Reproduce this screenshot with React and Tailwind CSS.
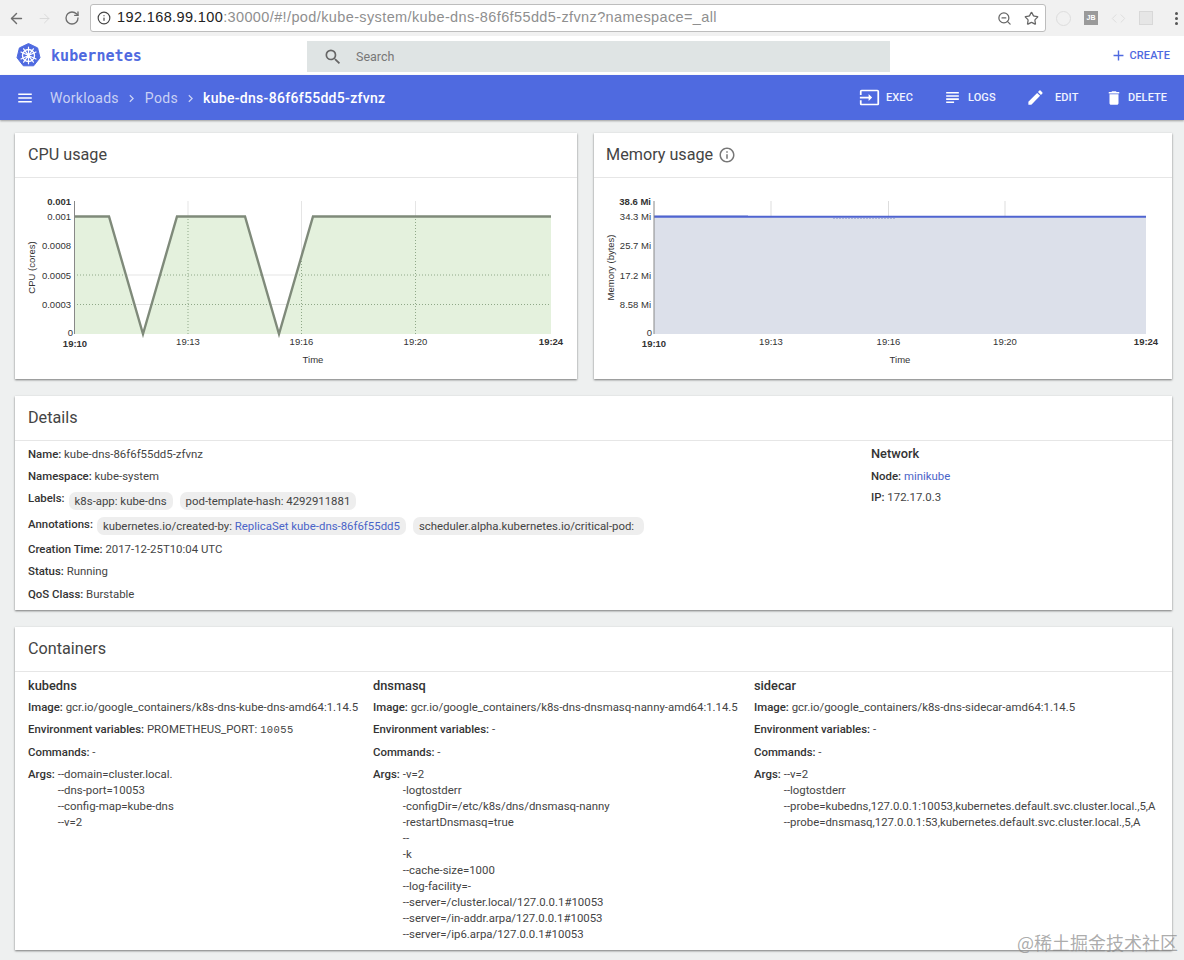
import React from 'react';
import { ArrowLeft, ArrowRight, RotateCw, Info, ZoomOut, Star, Code } from 'lucide-react';
import { MdMenu, MdSearch, MdAdd, MdInput, MdSubject, MdEdit, MdDelete, MdInfoOutline, MdChevronRight } from 'react-icons/md';

const KubeLogo = () => (
  <svg width="25" height="25" viewBox="0 0 25 25">
    <path d="M12.5 0.5 L21.6 4.9 L24 14.7 L17.7 22.8 L7.3 22.8 L1 14.7 L3.4 4.9 Z" fill="#4f6ae0" stroke="#4f6ae0" strokeWidth="1" strokeLinejoin="round" />
    <g stroke="#fff" fill="none" strokeLinecap="round">
      <circle cx="12.5" cy="12.5" r="6" strokeWidth="1.4" />
      <path strokeWidth="1.2" d="M12.5 4.2V20.8M5 9L20 16M5 16L20 9M7.6 5.8L17.4 19.2M17.4 5.8L7.6 19.2" />
    </g>
    <circle cx="12.5" cy="12.5" r="1.5" fill="#fff" />
  </svg>
);

const BrowserBar = () => (
  <div className="h-[36px] bg-[#f1f1f1] flex items-center relative">
    <div className="w-[90px] flex items-center pl-[8px] gap-[12px] text-[#6e6e6e]">
      <ArrowLeft size={17} strokeWidth={2} />
      <ArrowRight size={15} strokeWidth={1.5} className="text-[#d8d8d8]" />
      <RotateCw size={16} strokeWidth={2} />
    </div>
    <div className="w-[956px] h-[28px] bg-white border border-[#bdbdbd] rounded-[3px] flex items-center pl-[6px] pr-[4px]">
      <Info size={14} className="text-[#444] mr-[6px] shrink-0" />
      <span className="font-['Liberation_Sans',sans-serif] text-[14.5px] text-[#8f8f8f] whitespace-nowrap grow tracking-[0.38px]">
        <span className="text-[#222]">192.168.99.100</span>:30000/#!/pod/kube-system/kube-dns-86f6f55dd5-zfvnz?namespace=_all
      </span>
      <ZoomOut size={15} className="text-[#666] mr-[12px] shrink-0" />
      <Star size={15} strokeWidth={2} className="text-[#666] mr-[2px] shrink-0" />
    </div>
    <div className="flex items-center pl-[10px] gap-[13px] text-[#dcdcdc]">
      <div className="w-[15px] h-[15px] rounded-full border border-[#dddddd]" />
      <div className="w-[14px] h-[14px] bg-[#9a9a9a] text-white text-[7px] font-bold leading-[14px] text-center font-['Liberation_Sans',sans-serif]">JB</div>
      <Code size={15} strokeWidth={1.5} />
      <div className="w-[14px] h-[14px] border border-[#d8d8d8] bg-[#e6e6e6]" />
      <div className="flex flex-col gap-[2px] ml-[9px]">
        <div className="w-[3px] h-[3px] rounded-full bg-[#555]" />
        <div className="w-[3px] h-[3px] rounded-full bg-[#555]" />
        <div className="w-[3px] h-[3px] rounded-full bg-[#555]" />
      </div>
    </div>
  </div>
);

const TopBar = () => (
  <div className="h-[39px] bg-white flex items-center">
    <div className="w-[307px] flex items-center pl-[16px]">
      <KubeLogo />
      <span className="ml-[10px] pt-[2px] font-['DejaVu_Sans_Mono',monospace] font-bold text-[15px] tracking-[0.05px] text-[#4f6ae0]">kubernetes</span>
    </div>
    <div className="w-[583px] h-[31px] bg-[#dfe4e4] flex items-center pl-[16px] mt-[2px]">
      <MdSearch size={20} className="text-[#666]" />
      <span className="ml-[13px] pt-[2px] text-[12.5px] text-[#777]">Search</span>
    </div>
    <div className="grow flex items-center justify-end pr-[14px] text-[#4f6ae0]">
      <MdAdd size={17} />
      <span className="ml-[3px] pt-[1px] text-[11px] font-medium tracking-[0.1px]">CREATE</span>
    </div>
  </div>
);

const ActionButton = ({ icon: Icon, label, size, gap, width }) => (
  <div className="flex items-center" style={{ width }}>
    <Icon size={size} />
    <span className="pt-[1px] text-[11px] font-medium tracking-[0.1px] text-[#f0f3ff]" style={{ marginLeft: gap }}>{label}</span>
  </div>
);

const ActionBar = () => (
  <div className="h-[45px] bg-[#4f6ae0] flex items-center text-white shadow-[0_1px_2px_rgba(0,0,0,0.35)] relative">
    <MdMenu size={18} className="ml-[16px]" />
    <span className="ml-[16px] pt-[2px] text-[14px] text-white/70 tracking-[0.3px]">Workloads</span>
    <MdChevronRight size={15} className="ml-[5px] mt-[2px] text-white/70" />
    <span className="ml-[6px] pt-[2px] text-[14px] text-white/70 tracking-[0.35px]">Pods</span>
    <MdChevronRight size={15} className="ml-[5px] mt-[2px] text-white/70" />
    <span className="ml-[5px] pt-[2px] text-[14px] font-medium tracking-[0.3px]">kube-dns-86f6f55dd5-zfvnz</span>
    <div className="grow" />
    <div className="flex items-center pr-[16px]">
      <ActionButton icon={MdInput} label="EXEC" size={21} gap={6} width={84} />
      <ActionButton icon={MdSubject} label="LOGS" size={19} gap={6} width={83} />
      <ActionButton icon={MdEdit} label="EDIT" size={19} gap={10} width={79} />
      <ActionButton icon={MdDelete} label="DELETE" size={18} gap={5} width={63} />
    </div>
  </div>
);

const Card = ({ title, extra, className = '', children }) => (
  <div className={`bg-white shadow-[0_1px_2px_rgba(0,0,0,0.5)] flex flex-col ${className}`}>
    <div className="h-[45px] shrink-0 border-b border-[#e6e6e6] flex items-center pl-[13px] text-[16.2px] text-[#444]">
      {title}
      {extra}
    </div>
    {children}
  </div>
);

const axisText = { fontFamily: '"Liberation Sans", sans-serif', fontSize: 9.5, fill: '#333' };

const Tick = ({ x, y, bold, anchor = 'end', children }) => (
  <text x={x} y={y} textAnchor={anchor} style={{ ...axisText, fontWeight: bold ? 700 : 400 }}>{children}</text>
);

const CpuChart = () => {
  const grid = [188, 301.5, 415.5];
  const rows = [275, 304.5];
  const line = 'M74.5 216.5 L109 216.5 L143 334 L177 216.5 L245 216.5 L279 334 L313 216.5 L551 216.5';
  const area = `${line} L551 334 L74.5 334 Z`;
  return (
    <svg viewBox="15 178 562 201" width="562" height="201" className="block">
      <defs>
        <clipPath id="cpu-area"><path d={area} /></clipPath>
      </defs>
      {rows.map((y) => (
        <line key={y} x1="74" y1={y} x2="551" y2={y} stroke="#e5e5e5" />
      ))}
      {grid.map((x) => (
        <line key={x} x1={x} y1="201" x2={x} y2="334" stroke="#e5e5e5" />
      ))}
      <path d={area} fill="#e4f1dd" />
      <g clipPath="url(#cpu-area)">
        {rows.map((y) => (
          <line key={y} x1="74" y1={y} x2="551" y2={y} stroke="#8fa888" strokeDasharray="1 2" />
        ))}
        {grid.map((x) => (
          <line key={x} x1={x} y1="201" x2={x} y2="334" stroke="#8fa888" strokeDasharray="1 2" />
        ))}
      </g>
      <path d={line} fill="none" stroke="#7f8a7a" strokeWidth="2.4" />
      <line x1="74.5" y1="201" x2="74.5" y2="334" stroke="#888" />
      <Tick x={71} y={205} bold>0.001</Tick>
      <Tick x={71} y={220}>0.001</Tick>
      <Tick x={71} y={249}>0.0008</Tick>
      <Tick x={71} y={278.5}>0.0005</Tick>
      <Tick x={71} y={308}>0.0003</Tick>
      <Tick x={73} y={335.5}>0</Tick>
      <Tick x={75} y={346.5} bold anchor="middle">19:10</Tick>
      <Tick x={188} y={345} anchor="middle">19:13</Tick>
      <Tick x={301.5} y={345} anchor="middle">19:16</Tick>
      <Tick x={415.5} y={345} anchor="middle">19:20</Tick>
      <Tick x={551} y={345} bold anchor="middle">19:24</Tick>
      <Tick x={313} y={363} anchor="middle">Time</Tick>
      <text transform="translate(34.5 267.5) rotate(-90)" textAnchor="middle" style={axisText}>CPU (cores)</text>
    </svg>
  );
};

const MemoryChart = () => (
  <svg viewBox="594 178 578 201" width="578" height="201" className="block">
    <rect x="654" y="217" width="492" height="117" fill="#dce0ea" />
    {[771, 888.5, 1005].map((x) => (
      <line key={x} x1={x} y1="201" x2={x} y2="219" stroke="#ddd" />
    ))}
    <line x1="654" y1="215.5" x2="748" y2="215.5" stroke="#b9c2e8" />
    <line x1="833" y1="218.5" x2="895" y2="218.5" stroke="#a9b2dc" strokeDasharray="2 1" />
    <line x1="654" y1="216.7" x2="1146" y2="216.7" stroke="#4f64d0" strokeWidth="2" />
    <line x1="654" y1="201" x2="654" y2="334" stroke="#888" />
    <Tick x={651} y={205} bold>38.6 Mi</Tick>
    <Tick x={651} y={220}>34.3 Mi</Tick>
    <Tick x={651} y={249}>25.7 Mi</Tick>
    <Tick x={651} y={278.5}>17.2 Mi</Tick>
    <Tick x={651} y={308}>8.58 Mi</Tick>
    <Tick x={652} y={335.5}>0</Tick>
    <Tick x={654} y={346.5} bold anchor="middle">19:10</Tick>
    <Tick x={771} y={345} anchor="middle">19:13</Tick>
    <Tick x={888.5} y={345} anchor="middle">19:16</Tick>
    <Tick x={1005} y={345} anchor="middle">19:20</Tick>
    <Tick x={1146} y={345} bold anchor="middle">19:24</Tick>
    <Tick x={900} y={363} anchor="middle">Time</Tick>
    <text transform="translate(614 267.5) rotate(-90)" textAnchor="middle" style={axisText}>Memory (bytes)</text>
  </svg>
);

const Field = ({ label, className = '', children }) => (
  <div className={`whitespace-nowrap ${className}`}>
    <span className="font-medium text-[#333]">{label}:</span> {children}
  </div>
);

const Chip = ({ className = '', children }) => (
  <span className={`h-[18px] pl-[6px] pr-[6px] rounded-[7px] bg-[#eeeeee] flex items-center whitespace-nowrap ${className}`}>{children}</span>
);

const Details = () => (
  <Card title="Details" className="h-[214px]">
    <div className="flex pl-[13px] pt-[5px] text-[11.4px] leading-[16px] text-[#444]">
      <div className="w-[843px] flex flex-col">
        <Field label="Name" className="h-[22px]">kube-dns-86f6f55dd5-zfvnz</Field>
        <Field label="Namespace" className="h-[22px]">kube-system</Field>
        <div className="h-[26px] flex gap-[4px]">
          <span className="font-medium text-[#333]">Labels:</span>
          <div className="flex gap-[7px] mt-[2px]">
            <Chip>k8s-app: kube-dns</Chip>
            <Chip>pod-template-hash: 4292911881</Chip>
          </div>
        </div>
        <div className="h-[25px] flex gap-[4px] items-start">
          <span className="font-medium text-[#333]">Annotations:</span>
          <div className="flex gap-[7px] mt-[1px]">
            <Chip>kubernetes.io/created-by:&nbsp;<span className="text-[#4a64c8]">ReplicaSet kube-dns-86f6f55dd5</span></Chip>
            <Chip className="!pr-[10px]">scheduler.alpha.kubernetes.io/critical-pod:</Chip>
          </div>
        </div>
        <Field label="Creation Time" className="h-[22px]">2017-12-25T10:04 UTC</Field>
        <Field label="Status" className="h-[23px]">Running</Field>
        <Field label="QoS Class">Burstable</Field>
      </div>
      <div className="flex flex-col">
        <div className="h-[22px] font-medium text-[12.8px] text-[#333]">Network</div>
        <Field label="Node" className="h-[21px]"><span className="text-[#4a64c8]">minikube</span></Field>
        <Field label="IP">172.17.0.3</Field>
      </div>
    </div>
  </Card>
);

const containers = [
  {
    name: 'kubedns',
    image: 'gcr.io/google_containers/k8s-dns-kube-dns-amd64:1.14.5',
    env: true,
    args: ['--domain=cluster.local.', '--dns-port=10053', '--config-map=kube-dns', '--v=2'],
    width: 'w-[345px]',
  },
  {
    name: 'dnsmasq',
    image: 'gcr.io/google_containers/k8s-dns-dnsmasq-nanny-amd64:1.14.5',
    args: ['-v=2', '-logtostderr', '-configDir=/etc/k8s/dns/dnsmasq-nanny', '-restartDnsmasq=true', '--', '-k', '--cache-size=1000', '--log-facility=-', '--server=/cluster.local/127.0.0.1#10053', '--server=/in-addr.arpa/127.0.0.1#10053', '--server=/ip6.arpa/127.0.0.1#10053'],
    width: 'w-[381px]',
  },
  {
    name: 'sidecar',
    image: 'gcr.io/google_containers/k8s-dns-sidecar-amd64:1.14.5',
    args: ['--v=2', '--logtostderr', '--probe=kubedns,127.0.0.1:10053,kubernetes.default.svc.cluster.local.,5,A', '--probe=dnsmasq,127.0.0.1:53,kubernetes.default.svc.cluster.local.,5,A'],
    width: 'w-[405px]',
  },
];

const Container = ({ item }) => (
  <div className={`${item.width} flex flex-col shrink-0`}>
    <div className="h-[21px] font-medium text-[12.8px] text-[#333]">{item.name}</div>
    <Field label="Image" className="h-[22px]">{item.image}</Field>
    <Field label="Environment variables" className="h-[23px]">
      {item.env ? <>PROMETHEUS_PORT: <span className="font-['Liberation_Mono',monospace] text-[10.5px] tracking-[0.4px]">10055</span></> : '-'}
    </Field>
    <Field label="Commands" className="h-[22px]">-</Field>
    <div className="flex gap-[3px]">
      <span className="font-medium text-[#333]">Args:</span>
      <div className="flex flex-col">
        {item.args.map((arg, i) => (
          <div key={i} className="whitespace-nowrap">{arg}</div>
        ))}
      </div>
    </div>
  </div>
);

const Containers = () => (
  <Card title="Containers" className="h-[323px]">
    <div className="flex pl-[13px] pt-[6px] text-[11.4px] leading-[16px] text-[#444]">
      {containers.map((c) => <Container key={c.name} item={c} />)}
    </div>
  </Card>
);

export default function App() {
  return (
    <div className="w-[1184px] h-[960px] overflow-hidden relative bg-[#eef0f0] font-['Roboto',sans-serif]">
      <BrowserBar />
      <TopBar />
      <ActionBar />
      <div className="flex flex-col gap-[17px] pt-[13px] pl-[15px] pr-[12px]">
        <div className="flex gap-[17px]">
          <Card title="CPU usage" className="w-[562px] h-[246px]">
            <CpuChart />
          </Card>
          <Card
            title={<span className="-ml-[1px]">Memory usage</span>}
            className="w-[578px] h-[246px]"
            extra={<MdInfoOutline size={18} className="ml-[5px] text-[#777]" />}
          >
            <MemoryChart />
          </Card>
        </div>
        <Details />
        <Containers />
      </div>
      <div className="absolute right-[6px] bottom-[7px] text-[18px] leading-[22px] text-[#888]/70 font-['Noto_Sans_CJK_SC',sans-serif] whitespace-nowrap">@稀土掘金技术社区</div>
    </div>
  );
}
